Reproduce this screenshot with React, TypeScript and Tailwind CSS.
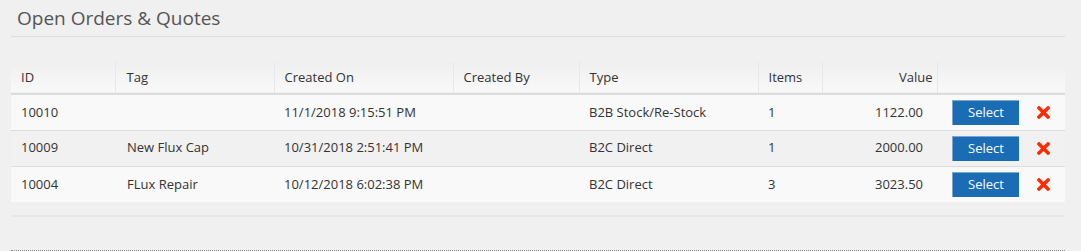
const rows = [
  { id: "10010", tag: "", created: "11/1/2018 9:15:51 PM", by: "", type: "B2B Stock/Re-Stock", items: "1", value: "1122.00" },
  { id: "10009", tag: "New Flux Cap", created: "10/31/2018 2:51:41 PM", by: "", type: "B2C Direct", items: "1", value: "2000.00" },
  { id: "10004", tag: "FLux Repair", created: "10/12/2018 6:02:38 PM", by: "", type: "B2C Direct", items: "3", value: "3023.50" },
];

function DeleteIcon() {
  return (
    <svg width="13" height="13" viewBox="0 0 13 13" className="block">
      <path d="M2 2 L11 11 M11 2 L2 11" stroke="#ff2a00" strokeWidth="3.4" strokeLinecap="square" />
    </svg>
  );
}

export default function App() {
  return (
    <div className="w-[1081px] h-[251px] bg-[#f0f0f0] overflow-hidden font-['Open_Sans',sans-serif] text-[13px] text-[#333]">
      <div className="pl-[11px] w-[1065px]">
        <div className="border-b border-[#dedede] h-[37px] pl-[6px] pt-[5px]">
          <h1 className="text-[19px] leading-[26px] text-[#555] font-normal">Open Orders &amp; Quotes</h1>
        </div>
        <table className="mt-[25px] w-full border-collapse">
          <thead>
            <tr className="bg-gradient-to-b from-[#efefef] to-[#f9f9f9] h-[32px] border-b-[2px] border-[#dcdcdc]">
              <th className="w-[104px] pl-[10px] text-left font-normal border-r border-[#e8e8e8]">ID</th>
              <th className="w-[159px] pl-[11px] text-left font-normal border-r border-[#e8e8e8]">Tag</th>
              <th className="w-[179px] pl-[10px] text-left font-normal border-r border-[#e8e8e8]">Created On</th>
              <th className="w-[126px] pl-[10px] text-left font-normal border-r border-[#e8e8e8]">Created By</th>
              <th className="w-[179px] pl-[10px] text-left font-normal border-r border-[#e8e8e8]">Type</th>
              <th className="w-[64px] pl-[10px] text-left font-normal border-r border-[#e8e8e8]">Items</th>
              <th className="w-[115px] pr-[4px] text-right font-normal border-r border-[#e8e8e8]">Value</th>
              <th className="font-normal"></th>
            </tr>
          </thead>
          <tbody>
            {rows.map((r, i) => (
              <tr
                key={r.id}
                className={`h-[36px] ${i % 2 === 0 ? "bg-[#f9f9f9]" : "bg-[#f1f1f1]"} ${i < rows.length - 1 ? "border-b border-[#dddddd]" : ""}`}
              >
                <td className="pl-[10px]">{r.id}</td>
                <td className="pl-[12px]">{r.tag}</td>
                <td className="pl-[10px]">{r.created}</td>
                <td className="pl-[10px]">{r.by}</td>
                <td className="pl-[10px]">{r.type}</td>
                <td className="pl-[10px]">{r.items}</td>
                <td className="pr-[14px] text-right">{r.value}</td>
                <td>
                  <div className="flex items-center">
                    <button className="ml-[15px] w-[67px] h-[25px] bg-[#1a6db5] border-l border-t border-[#7aa6d0] text-white text-[13px] leading-none">
                      Select
                    </button>
                    <span className="ml-[18px]">
                      <DeleteIcon />
                    </span>
                  </div>
                </td>
              </tr>
            ))}
          </tbody>
        </table>
        <div className="mt-[13px] border-t-[2px] border-[#e6e6e6]"></div>
        <div className="mt-[33px] border-t border-dotted border-[#888]"></div>
      </div>
    </div>
  );
}
